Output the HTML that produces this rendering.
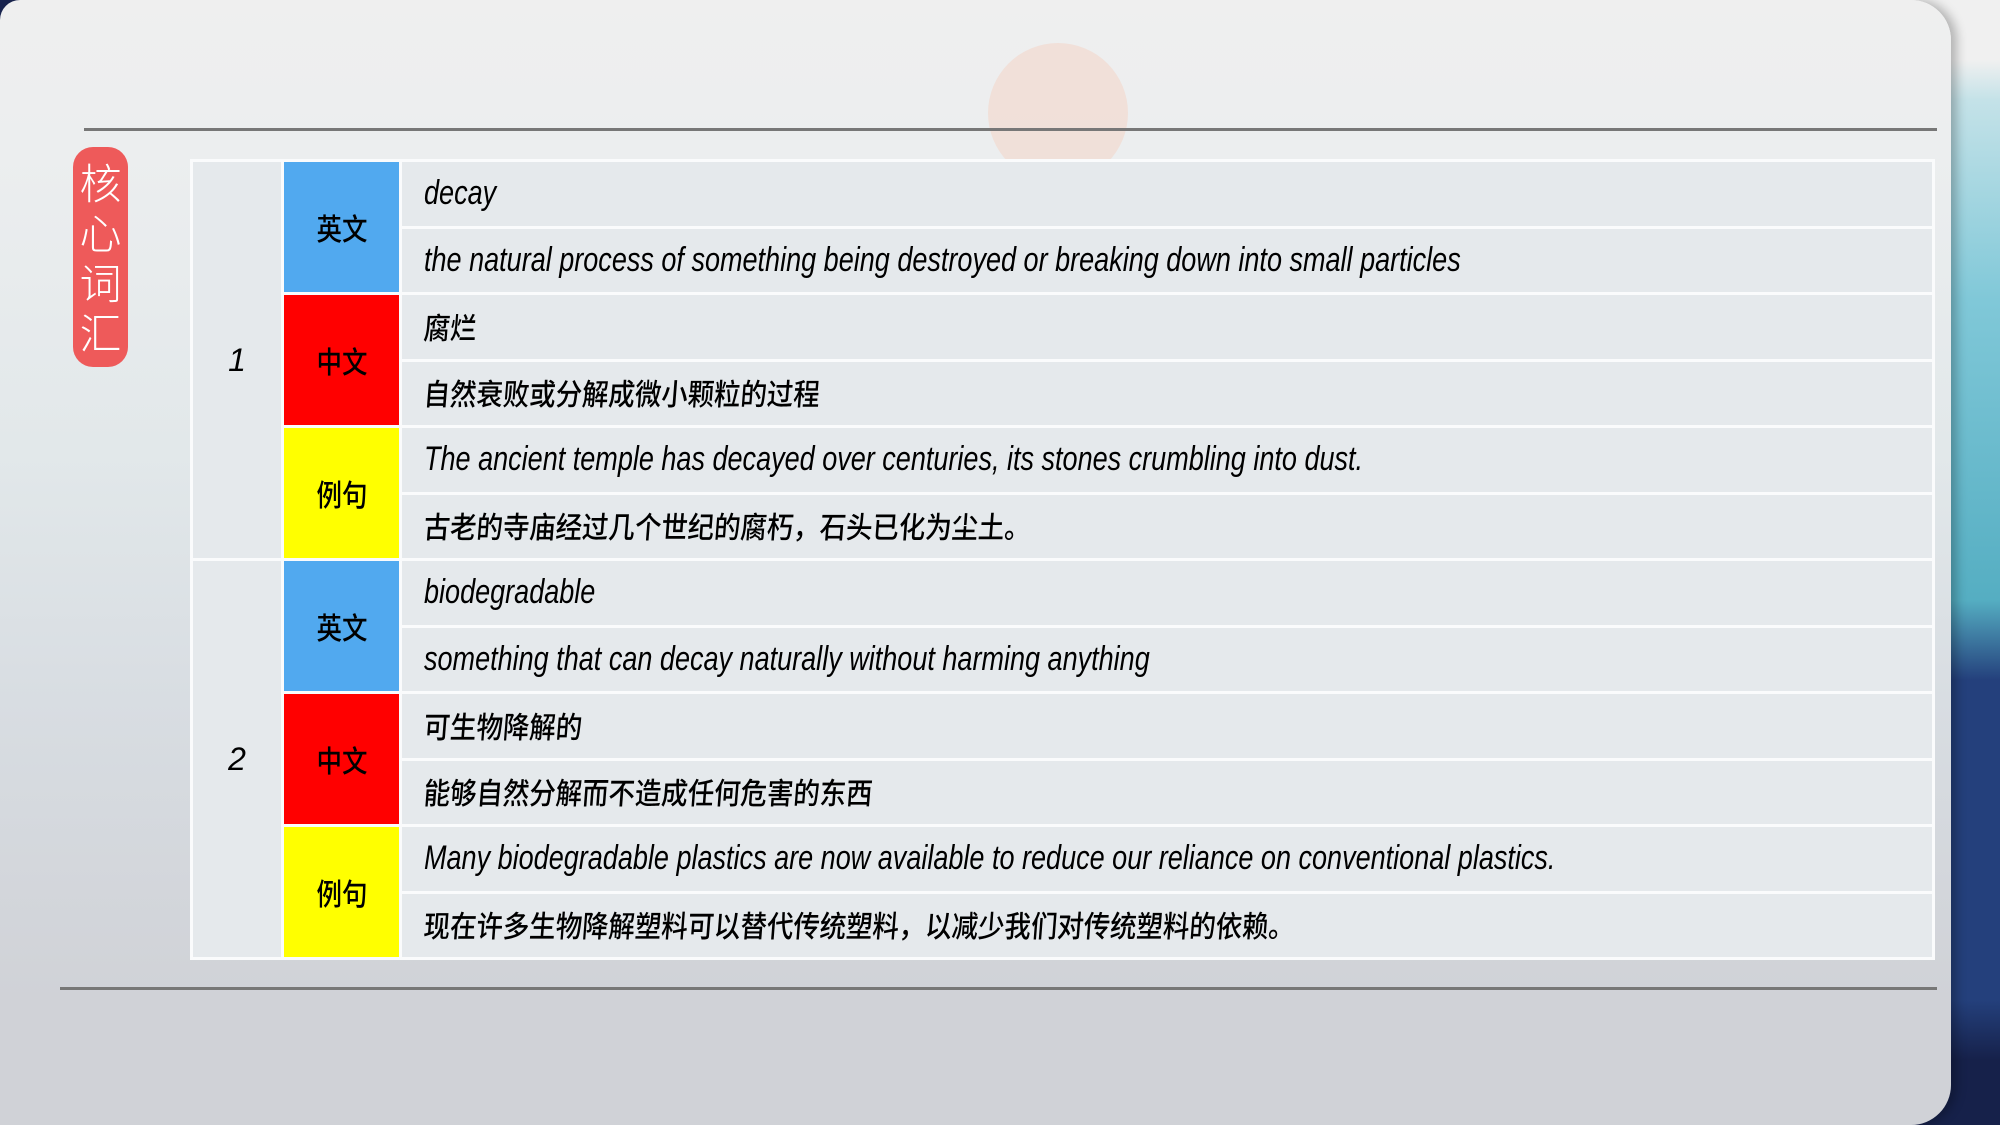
<!DOCTYPE html>
<html><head><meta charset="utf-8"><style>
*{margin:0;padding:0;box-sizing:border-box}
body{width:2000px;height:1125px;overflow:hidden;position:relative;background:#1a2550;font-family:"Liberation Sans","Noto Sans CJK SC",sans-serif}
.rbg{position:absolute;left:1900px;top:0;width:100px;height:1125px;background:linear-gradient(#f0f0f0 0,#f0f0f0 60px,#c4e2e8 100px,#80c8d8 300px,#55aec2 600px,#24407c 680px,#24407c 1000px,#16214a 1060px)}
.panel{position:absolute;left:0;top:0;width:1951px;height:1125px;border-radius:20px 40px 40px 0;background:linear-gradient(#efefef 0,#eceeef 150px,#e2e8ea 450px,#d8dde2 700px,#d0d2d7 1000px);box-shadow:6px 0 10px rgba(0,0,0,.25)}
.sun{position:absolute;left:988px;top:43px;width:140px;height:140px;border-radius:50%;background:#f1dcd3;opacity:.8}
.line{position:absolute;height:3px;background:#777}
.tag{position:absolute;left:73px;top:147px;width:55px;height:220px;background:#ee5a5a;border-radius:20px;color:#fff;font-size:42px;line-height:50px;text-align:center;padding-top:10px;font-family:"Noto Sans CJK SC",sans-serif;font-weight:300}
table{position:absolute;left:190px;top:159px;width:1745px;height:798px;border-collapse:collapse;background:#e5e9ec}
td{border:3px solid #fafbfc;height:66.5px;padding:0}
td.n{width:91px;text-align:center;font-style:italic;font-size:32px}
td.l{width:118px;text-align:center;font-size:30px;font-family:"Noto Sans CJK SC",sans-serif;font-weight:500}
td.l span{display:inline-block;transform:scaleX(.85)}
.b{background:#51a9ef}.r{background:#ff0000}.y{background:#ffff00}
td.c{padding-left:22px;font-size:34px;font-style:italic;white-space:nowrap}
td.c span{display:inline-block;transform:scaleX(.795);transform-origin:left center;margin-top:-4px}
td.z span{transform:scaleX(.88) skewX(-5deg);font-family:"Noto Sans CJK SC",sans-serif;font-weight:500;font-size:30px;font-style:normal;margin-top:-2px}
</style></head><body>
<div class="rbg"></div>
<div class="panel"><div class="sun"></div></div>
<div class="line" style="left:84px;top:128px;width:1853px"></div>
<div class="line" style="left:60px;top:987px;width:1877px"></div>
<div class="tag">核<br>心<br>词<br>汇</div>
<table>
<tr><td class="n" rowspan="6">1</td><td class="l b" rowspan="2"><span>英文</span></td><td class="c"><span>decay</span></td></tr>
<tr><td class="c"><span>the natural process of something being destroyed or breaking down into small particles</span></td></tr>
<tr><td class="l r" rowspan="2"><span>中文</span></td><td class="c z"><span>腐烂</span></td></tr>
<tr><td class="c z"><span>自然衰败或分解成微小颗粒的过程</span></td></tr>
<tr><td class="l y" rowspan="2"><span>例句</span></td><td class="c"><span>The ancient temple has decayed over centuries, its stones crumbling into dust.</span></td></tr>
<tr><td class="c z"><span>古老的寺庙经过几个世纪的腐朽，石头已化为尘土。</span></td></tr>
<tr><td class="n" rowspan="6">2</td><td class="l b" rowspan="2"><span>英文</span></td><td class="c"><span>biodegradable</span></td></tr>
<tr><td class="c"><span>something that can decay naturally without harming anything</span></td></tr>
<tr><td class="l r" rowspan="2"><span>中文</span></td><td class="c z"><span>可生物降解的</span></td></tr>
<tr><td class="c z"><span>能够自然分解而不造成任何危害的东西</span></td></tr>
<tr><td class="l y" rowspan="2"><span>例句</span></td><td class="c"><span>Many biodegradable plastics are now available to reduce our reliance on conventional plastics.</span></td></tr>
<tr><td class="c z"><span>现在许多生物降解塑料可以替代传统塑料，以减少我们对传统塑料的依赖。</span></td></tr>
</table>
</body></html>
